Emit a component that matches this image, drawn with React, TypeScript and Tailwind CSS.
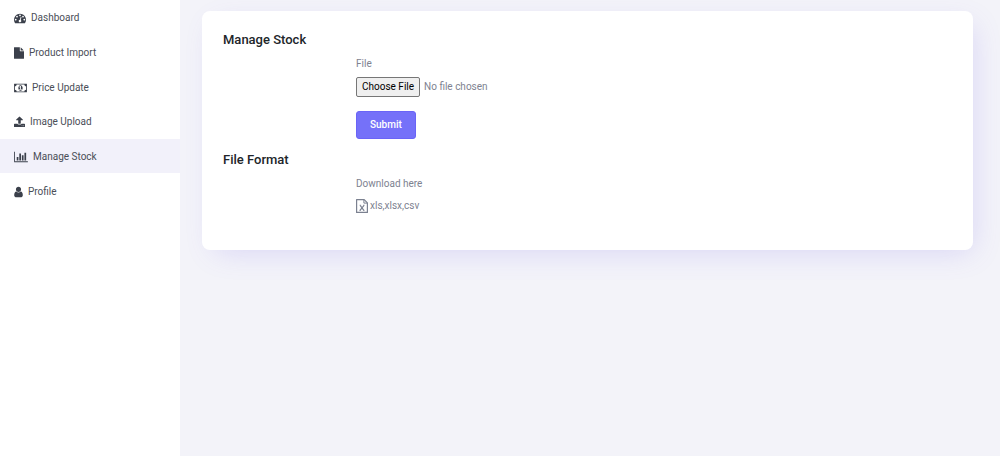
import React from "react";

type NavItem = {
  label: string;
  viewBox: string;
  size: string;
  path: string;
  active?: boolean;
};

const navItems: NavItem[] = [
  {
    label: "Dashboard",
    viewBox: "0 0 1792 1792",
    size: "w-3",
    path: "M384 1152q0-53-37.5-90.5t-90.5-37.5-90.5 37.5-37.5 90.5 37.5 90.5 90.5 37.5 90.5-37.5 37.5-90.5zm192-448q0-53-37.5-90.5t-90.5-37.5-90.5 37.5-37.5 90.5 37.5 90.5 90.5 37.5 90.5-37.5 37.5-90.5zm428 481l101-382q6-26-7.5-48.5t-38.5-29.5-48 6.5-30 39.5l-101 382q-60 5-107 43.5t-63 98.5q-20 77 20 146t117 89 146-20 89-117q16-60-6-117t-72-91zm660-33q0-53-37.5-90.5t-90.5-37.5-90.5 37.5-37.5 90.5 37.5 90.5 90.5 37.5 90.5-37.5 37.5-90.5zm-640-640q0-53-37.5-90.5t-90.5-37.5-90.5 37.5-37.5 90.5 37.5 90.5 90.5 37.5 90.5-37.5 37.5-90.5zm448 192q0-53-37.5-90.5t-90.5-37.5-90.5 37.5-37.5 90.5 37.5 90.5 90.5 37.5 90.5-37.5 37.5-90.5zm320 448q0 261-141 483-19 29-54 29h-1402q-35 0-54-29-141-221-141-483 0-182 71-348t191-286 286-191 348-71 348 71 286 191 191 286 71 348z",
  },
  {
    label: "Product Import",
    viewBox: "128 0 1536 1792",
    size: "w-[10px]",
    path: "M1152 512v-472q22 14 36 28l408 408q14 14 28 36h-472zm-128 32q0 40 28 68t68 28h544v1056q0 40-28 68t-68 28h-1344q-40 0-68-28t-28-68v-1600q0-40 28-68t68-28h800v544z",
  },
  {
    label: "Price Update",
    viewBox: "-64 0 1920 1792",
    size: "w-[13px]",
    path: "M704 1152h384v-96h-128v-448h-114l-148 137 77 80q42-37 55-57h2v288h-128v96zm512-256q0 70-21 142t-59.5 134-101.5 101-138 39-138-39-101.5-101-59.5-134-21-142 21-142 59.5-134 101.5-101 138-39 138 39 101.5 101 59.5 134 21 142zm512 256v-512q-106 0-181-75t-75-181h-1152q0 106-75 181t-181 75v512q106 0 181 75t75 181h1152q0-106 75-181t181-75zm128-832v1152q0 26-19 45t-45 19h-1792q-26 0-45-19t-19-45v-1152q0-26 19-45t45-19h1792q26 0 45 19t19 45z",
  },
  {
    label: "Image Upload",
    viewBox: "64 0 1664 1792",
    size: "w-[11px]",
    path: "M1344 1472q0-26-19-45t-45-19-45 19-19 45 19 45 45 19 45-19 19-45zm256 0q0-26-19-45t-45-19-45 19-19 45 19 45 45 19 45-19 19-45zm128-224v320q0 40-28 68t-68 28h-1472q-40 0-68-28t-28-68v-320q0-40 28-68t68-28h427q21 56 70.5 92t110.5 36h256q61 0 110.5-36t70.5-92h427q40 0 68 28t28 68zm-325-648q-17 40-59 40h-256v448q0 26-19 45t-45 19h-256q-26 0-45-19t-19-45v-448h-256q-42 0-59-40-17-39 14-69l448-448q18-19 45-19t45 19l448 448q31 30 14 69z",
  },
  {
    label: "Manage Stock",
    viewBox: "0 0 2048 1792",
    size: "w-[14px]",
    path: "M640 896v512h-256v-512h256zm384-512v1024h-256v-1024h256zm1024 1152v128h-2048v-1536h128v1408h1920zm-640-896v768h-256v-768h256zm384-384v1152h-256v-1152h256z",
    active: true,
  },
  {
    label: "Profile",
    viewBox: "256 0 1280 1792",
    size: "w-[9px]",
    path: "M1536 1399q0 109-62.5 187t-150.5 78h-854q-88 0-150.5-78t-62.5-187q0-85 8.5-160.5t31.5-152 58.5-131 94-89 134.5-34.5q131 128 313 128t313-128q76 0 134.5 34.5t94 89 58.5 131 31.5 152 8.5 160.5zm-256-887q0 159-112.5 271.5t-271.5 112.5-271.5-112.5-112.5-271.5 112.5-271.5 271.5-112.5 271.5 112.5 112.5 271.5z",
  },
];

function Sidebar() {
  return (
    <aside className="w-[180px] shrink-0 bg-white">
      <nav aria-label="Main" className="grid h-52 grid-rows-6">
        {navItems.map((item) => (
          <a
            key={item.label}
            href="#"
            aria-current={item.active ? "page" : undefined}
            className={
              item.active
                ? "flex items-center gap-[5px] bg-[#f2f1fa] pt-[2px] pl-[14px] text-[#4a4e57]"
                : "flex items-center gap-[5px] pt-[2px] pl-[14px] text-[#4a4e57]"
            }
          >
            <svg
              viewBox={item.viewBox}
              fill="#3b404b"
              aria-hidden="true"
              className={`h-3 shrink-0 ${item.size}`}
            >
              <path d={item.path} />
            </svg>
            <span>{item.label}</span>
          </a>
        ))}
      </nav>
    </aside>
  );
}

function SheetIcon() {
  return (
    <svg
      viewBox="0 0 12 14"
      fill="none"
      stroke="#7b8190"
      aria-hidden="true"
      className="h-[14px] w-3 shrink-0"
    >
      <path d="M.6.6h7.6l3.2 3.2v9.6H.6z" strokeWidth="1.2" strokeLinejoin="round" />
      <path d="M7.9.8v3.3h3.3" strokeWidth="1" />
      <path d="M4.2 6.3l3.6 5M8 6.3l-4 5" strokeWidth="1.2" />
      <path d="M3.6 6.2h1.5M7.1 6.2h1.5M3.3 11.4h1.6M7 11.4h1.6" strokeWidth=".7" />
    </svg>
  );
}

export default function App() {
  return (
    <div className="flex min-h-screen bg-[#f3f3f9] font-['Roboto',sans-serif] text-[10px] leading-4 text-[#7e8290]">
      <Sidebar />
      <main className="min-w-0 flex-1 pt-[11px] pr-[27px] pl-[22px]">
        <section className="rounded-lg bg-white px-[21px] pt-5 pb-9 shadow-[6px_8px_28px_-8px_rgba(108,92,231,0.22)]">
          <h2 className="text-[13px] leading-[18px] font-medium text-[#212529]">Manage Stock</h2>
          <form
            className="ml-[133px] flex flex-col items-start pt-[7px]"
            onSubmit={(event) => event.preventDefault()}
          >
            <label htmlFor="stock-file">File</label>
            <input
              id="stock-file"
              type="file"
              className="mt-[5px] h-5 w-60 file:mr-1 file:h-5 file:rounded-xs file:border file:border-solid file:border-[#767676] file:bg-[#efefef] file:px-[5px] file:text-[10px] file:font-normal file:text-black"
            />
            <button
              type="submit"
              className="mt-[14px] h-7 rounded-[3px] border border-[#6a64f7] bg-[#7571f9] px-[13px] font-medium text-white"
            >
              Submit
            </button>
          </form>
          <h2 className="mt-3 text-[13px] leading-[18px] font-medium text-[#212529]">File Format</h2>
          <div className="ml-[133px] flex flex-col items-start gap-[6px] pt-[7px]">
            <p>Download here</p>
            <a href="#" className="flex items-center gap-[2px]">
              <SheetIcon />
              <span>xls,xlsx,csv</span>
            </a>
          </div>
        </section>
      </main>
    </div>
  );
}
